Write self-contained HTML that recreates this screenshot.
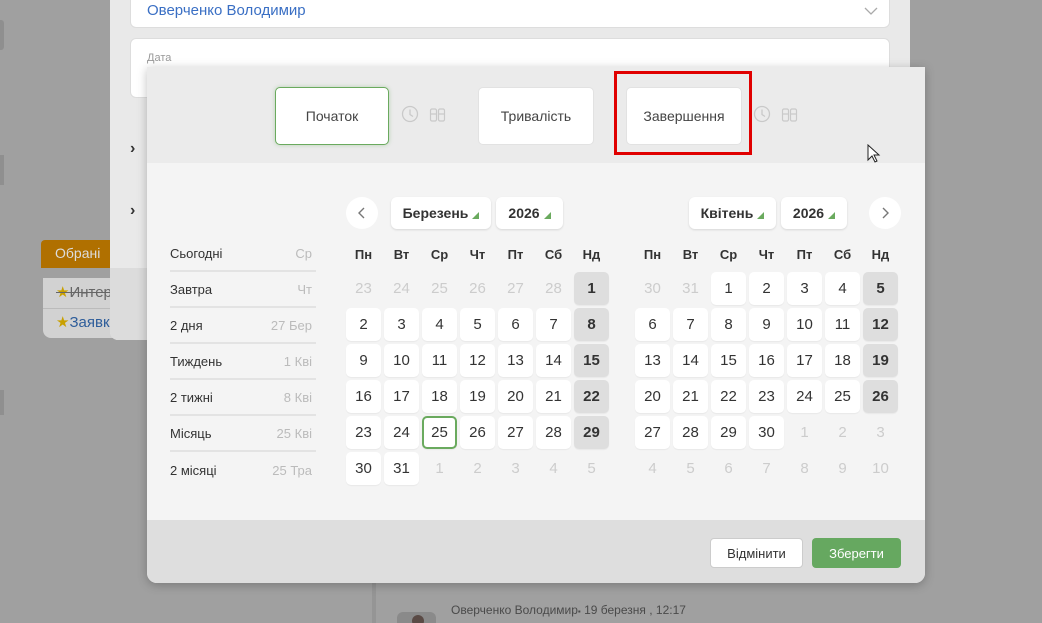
<!DOCTYPE html>
<html><head><meta charset="utf-8">
<style>
*{box-sizing:border-box;margin:0;padding:0}
html,body{width:1042px;height:623px;overflow:hidden}
body{background:#a0a0a0;font-family:"Liberation Sans","DejaVu Sans",sans-serif;position:relative;color:#333}
.abs{position:absolute}
.panel{left:110px;top:-10px;width:800px;height:350px;background:#e9e9e9;border-radius:0 0 8px 8px}
.panel2{left:110px;top:268px;width:260px;height:72px;background:#dcdcdc;border-radius:0 0 0 8px}
.field{background:#fff;border-radius:6px;border:1px solid #ddd}
.modal{left:147px;top:67px;width:778px;height:516px;background:#f4f4f4;border-radius:0 0 10px 10px;overflow:hidden;box-shadow:0 2px 10px rgba(0,0,0,.25)}
.hdr{left:0;top:0;width:778px;height:96px;background:#ebebeb}
.ftr{left:0;top:453px;width:778px;height:63px;background:#dedede}
.tb{background:#fff;border-radius:5px;font-size:14px;color:#444;display:flex;align-items:center;justify-content:center;border:1px solid #e2e2e2}
.sel{background:#fff;border-radius:6px;font-weight:bold;font-size:14px;color:#333;display:flex;align-items:center;justify-content:center;box-shadow:0 1px 2px rgba(0,0,0,.12)}
.tri{display:inline-block;width:0;height:0;border-left:7px solid transparent;border-bottom:7px solid #6aaa5e;margin-left:4px;margin-top:4px}
.circ{width:32px;height:32px;border-radius:50%;background:#fff;display:flex;align-items:center;justify-content:center}
.wd{display:grid;grid-template-columns:repeat(7,35px);column-gap:3px;font-size:13px;font-weight:bold;text-align:center;color:#333}
.g{display:grid;grid-template-columns:repeat(7,35px);grid-auto-rows:33px;gap:3px}
.g div{display:flex;align-items:center;justify-content:center;font-size:15px;color:#333;background:#fff;border-radius:5px;box-shadow:0 1px 1px rgba(0,0,0,.05)}
.g .f{background:none;color:#ccc;box-shadow:none}
.g .s{background:#dedede;font-weight:bold}
.g .t{border:2px solid #6aaa5e}
.q{left:23px;width:146px;height:36px;display:flex;justify-content:space-between;align-items:center;font-size:13px;color:#333;border-bottom:2px solid #e3e3e3;padding-right:4px}
.q span{color:#bbb}
</style></head><body>
<div class="abs" style="left:0;top:20px;width:4px;height:30px;background:#8f8f8f;border-radius:0 3px 3px 0"></div>
<div class="abs" style="left:0;top:155px;width:4px;height:30px;background:#8f8f8f"></div>
<div class="abs" style="left:0;top:390px;width:4px;height:25px;background:#8f8f8f"></div>
<div class="abs" style="left:41px;top:240px;width:80px;height:28px;background:#b07000;border-radius:4px 0 0 0;color:#ddd;font-size:14px;padding:5px 14px">Обрані</div>
<div class="abs" style="left:43px;top:278px;width:80px;height:60px;background:#d2d2d2;border-radius:0 0 0 8px"></div>
<div class="abs" style="left:43px;top:308px;width:80px;height:1px;background:#bbb"></div>
<div class="abs" style="left:56px;top:283px;font-size:15px;color:#666;text-decoration:line-through"><span style="color:#c9a000;text-decoration:none">★</span>Интер</div>
<div class="abs" style="left:56px;top:313px;font-size:15px;color:#2e5d9a"><span style="color:#c9a000">★</span>Заявк</div>
<div class="abs panel"></div>
<div class="abs panel2"></div>
<div class="abs field" style="left:130px;top:-6px;width:760px;height:34px"></div>
<div class="abs" style="left:147px;top:2px;font-size:15px;color:#3a6fc4">Оверченко Володимир</div>
<svg class="abs" style="left:864px;top:6px" width="14" height="10"><path d="M1 2l6 6 6-6" fill="none" stroke="#aaa" stroke-width="1.3"/></svg>
<div class="abs field" style="left:130px;top:38px;width:760px;height:60px"></div>
<div class="abs" style="left:147px;top:52px;font-size:11px;color:#999">Дата</div>
<div class="abs" style="left:130px;top:140px;font-size:16px;color:#333;font-weight:bold">›</div>
<div class="abs" style="left:130px;top:202px;font-size:16px;color:#333;font-weight:bold">›</div>
<div class="abs" style="left:372px;top:340px;width:4px;height:283px;background:#959595"></div>
<div class="abs" style="left:397px;top:612px;width:39px;height:20px;background:#8a8a8a;border-radius:6px"></div>
<div class="abs" style="left:412px;top:615px;width:12px;height:12px;background:#5a4a45;border-radius:50%"></div>
<div class="abs" style="left:451px;top:603px;font-size:12px;color:#4a4a4a">Оверченко Володимир<b style="font-size:8px">▪</b> 19 березня , 12:17</div>

<div class="abs modal">
 <div class="abs hdr"></div>
 <div class="abs tb" style="left:128px;top:20px;width:114px;height:58px;border:1px solid #6aaa5e;box-shadow:0 0 4px rgba(106,170,94,.4)">Початок</div>
 <svg class="abs" style="left:254px;top:38px" width="18" height="18"><circle cx="9" cy="9" r="7.5" fill="none" stroke="#c9c9c9" stroke-width="1.3"/><path d="M9 4.5v5l3 2" fill="none" stroke="#c9c9c9" stroke-width="1.3"/></svg>
 <svg class="abs" style="left:282px;top:39px" width="18" height="18"><rect x="1.5" y="3" width="6" height="12" rx="1.5" fill="none" stroke="#c9c9c9" stroke-width="1.2"/><rect x="9.5" y="3" width="6" height="12" rx="1.5" fill="none" stroke="#c9c9c9" stroke-width="1.2"/><path d="M1.5 8h6M9.5 8h6" stroke="#c9c9c9" stroke-width="1.2"/></svg>
 <div class="abs tb" style="left:331px;top:20px;width:116px;height:58px">Тривалість</div>
 <div class="abs" style="left:467px;top:4px;width:138px;height:84px;border:3px solid #e00000"></div>
 <div class="abs tb" style="left:479px;top:20px;width:116px;height:58px">Завершення</div>
 <svg class="abs" style="left:606px;top:38px" width="18" height="18"><circle cx="9" cy="9" r="7.5" fill="none" stroke="#c9c9c9" stroke-width="1.3"/><path d="M9 4.5v5l3 2" fill="none" stroke="#c9c9c9" stroke-width="1.3"/></svg>
 <svg class="abs" style="left:634px;top:39px" width="18" height="18"><rect x="1.5" y="3" width="6" height="12" rx="1.5" fill="none" stroke="#c9c9c9" stroke-width="1.2"/><rect x="9.5" y="3" width="6" height="12" rx="1.5" fill="none" stroke="#c9c9c9" stroke-width="1.2"/><path d="M1.5 8h6M9.5 8h6" stroke="#c9c9c9" stroke-width="1.2"/></svg>
 <svg class="abs" style="left:720px;top:77px" width="14" height="20"><path d="M1 1v15l4-4 3 6 2-1-3-6h5z" fill="#fff" stroke="#222" stroke-width="1"/></svg>

 <div class="abs q" style="top:169px">Сьогодні<span>Ср</span></div>
 <div class="abs q" style="top:205px">Завтра<span>Чт</span></div>
 <div class="abs q" style="top:241px">2 дня<span>27 Бер</span></div>
 <div class="abs q" style="top:277px">Тиждень<span>1 Кві</span></div>
 <div class="abs q" style="top:313px">2 тижні<span>8 Кві</span></div>
 <div class="abs q" style="top:349px">Місяць<span>25 Кві</span></div>
 <div class="abs q" style="top:385px;border:none">2 місяці<span>25 Тра</span></div>

 <div class="abs circ" style="left:199px;top:130px"><svg width="10" height="14"><path d="M7 2L2 7l5 5" fill="none" stroke="#777" stroke-width="1.4"/></svg></div>
 <div class="abs sel" style="left:244px;top:130px;width:100px;height:32px">Березень<i class="tri"></i></div>
 <div class="abs sel" style="left:349px;top:130px;width:67px;height:32px">2026<i class="tri"></i></div>
 <div class="abs sel" style="left:542px;top:130px;width:87px;height:32px">Квітень<i class="tri"></i></div>
 <div class="abs sel" style="left:634px;top:130px;width:66px;height:32px">2026<i class="tri"></i></div>
 <div class="abs circ" style="left:722px;top:130px"><svg width="10" height="14"><path d="M3 2l5 5-5 5" fill="none" stroke="#777" stroke-width="1.4"/></svg></div>

 <div class="abs wd" style="left:199px;top:180px"><span>Пн</span><span>Вт</span><span>Ср</span><span>Чт</span><span>Пт</span><span>Сб</span><span>Нд</span></div>
 <div class="abs wd" style="left:488px;top:180px"><span>Пн</span><span>Вт</span><span>Ср</span><span>Чт</span><span>Пт</span><span>Сб</span><span>Нд</span></div>

 <div class="abs g" style="left:199px;top:205px">
  <div class="f">23</div><div class="f">24</div><div class="f">25</div><div class="f">26</div><div class="f">27</div><div class="f">28</div><div class="s">1</div>
  <div>2</div><div>3</div><div>4</div><div>5</div><div>6</div><div>7</div><div class="s">8</div>
  <div>9</div><div>10</div><div>11</div><div>12</div><div>13</div><div>14</div><div class="s">15</div>
  <div>16</div><div>17</div><div>18</div><div>19</div><div>20</div><div>21</div><div class="s">22</div>
  <div>23</div><div>24</div><div class="t">25</div><div>26</div><div>27</div><div>28</div><div class="s">29</div>
  <div>30</div><div>31</div><div class="f">1</div><div class="f">2</div><div class="f">3</div><div class="f">4</div><div class="f">5</div>
 </div>
 <div class="abs g" style="left:488px;top:205px">
  <div class="f">30</div><div class="f">31</div><div>1</div><div>2</div><div>3</div><div>4</div><div class="s">5</div>
  <div>6</div><div>7</div><div>8</div><div>9</div><div>10</div><div>11</div><div class="s">12</div>
  <div>13</div><div>14</div><div>15</div><div>16</div><div>17</div><div>18</div><div class="s">19</div>
  <div>20</div><div>21</div><div>22</div><div>23</div><div>24</div><div>25</div><div class="s">26</div>
  <div>27</div><div>28</div><div>29</div><div>30</div><div class="f">1</div><div class="f">2</div><div class="f">3</div>
  <div class="f">4</div><div class="f">5</div><div class="f">6</div><div class="f">7</div><div class="f">8</div><div class="f">9</div><div class="f">10</div>
 </div>

 <div class="abs ftr"></div>
 <div class="abs" style="left:563px;top:471px;width:93px;height:30px;background:#fff;border:1px solid #ccc;border-radius:4px;font-size:13px;color:#333;display:flex;align-items:center;justify-content:center">Відмінити</div>
 <div class="abs" style="left:665px;top:471px;width:89px;height:30px;background:#66a860;border-radius:4px;font-size:13px;color:#fff;display:flex;align-items:center;justify-content:center">Зберегти</div>
</div>
</body></html>
